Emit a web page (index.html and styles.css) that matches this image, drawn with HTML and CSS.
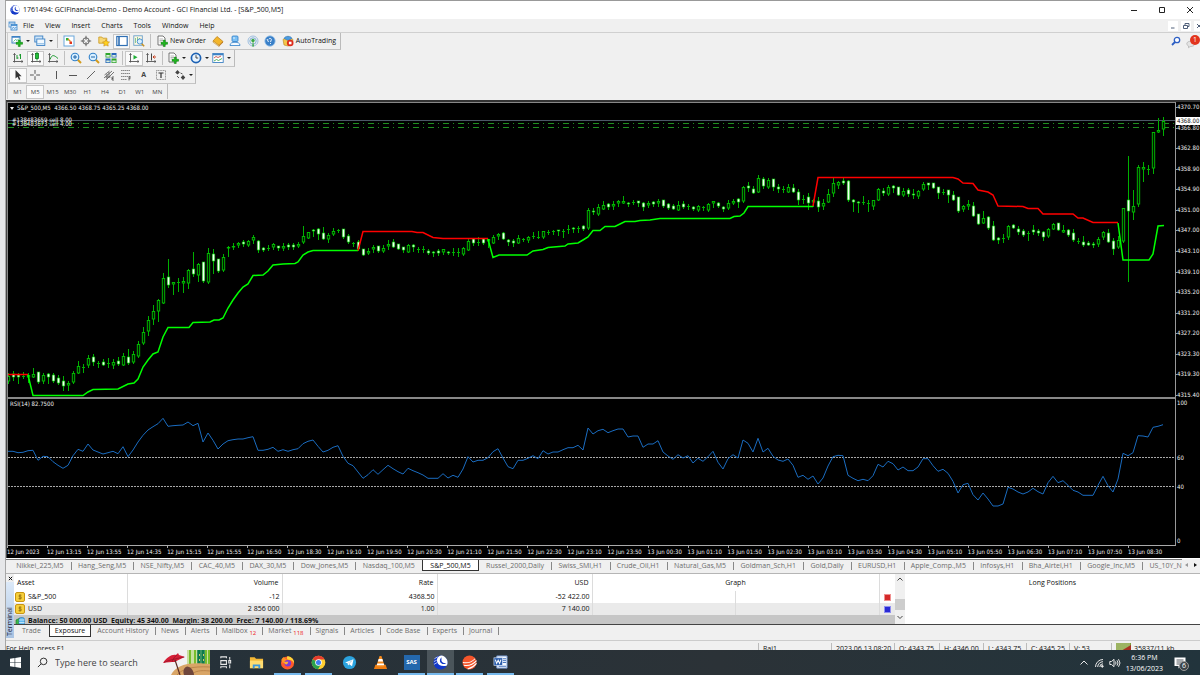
FILE: index.html
```html
<!DOCTYPE html>
<html lang="en">

<head>
    <meta charset="UTF-8">
    <meta name="viewport" content="width=device-width, initial-scale=1.0">
    <title>1761494: GCIFinancial-Demo - Demo Account</title>

    <link rel="stylesheet" href="styles.css">
</head>

<body>

    <!-- Shared icon shapes -->
    <svg class="defs" width="0" height="0">
        <defs>
            <symbol id="gci" viewBox="0 0 16 16">
                <circle cx="8" cy="8" r="7.5" fill="#1238c8" />
                <path d="M9 0.5C5 1 3.5 4 4.500 7.500C5.500 11 9 12.500 14.500 11.500C15.500 10 16 8 15 5C13 1.500 11 .6 9 .5Z" fill="#fff" />
                <path d="M9 2.500C6.500 5 7 8.500 10 9.500C12 10 13.500 9 14 8.500C12 9 9.500 8 9 6Z" fill="#1238c8" />
                <path d="M1.500 4L5 2M1 7l3-1.500M1 10l3.500-2" stroke="#fff" stroke-width=".7" />
            </symbol>
            <symbol id="plus" viewBox="0 0 8 8">
                <path d="M3 .5h2v2.500h2.500v2H5v2.500H3V5H.5V3H3Z" fill="#1fb91f" stroke="#0c7d10" stroke-width=".6" />
            </symbol>
            <symbol id="axes" viewBox="0 0 12 12">
                <path d="M2.500 1.500v9M1 9.500h10M1.500 3l1-1.500 1 1.500M9.500 8.500l1.500 1-1.500 1" fill="none" stroke="#555" stroke-width=".9" />
            </symbol>
            <symbol id="lens" viewBox="0 0 12 12">
                <path d="M7.500 7.500l3.500 3.500" stroke="#d49b1c" stroke-width="2" />
                <circle cx="5" cy="5" r="3.800" fill="#d8efff" stroke="#2f7fc9" stroke-width="1.100" />
            </symbol>
            <symbol id="page" viewBox="0 0 12 12">
                <path d="M2 1h5l2 2v7H2z" fill="#fff" stroke="#555" stroke-width=".8" />
                <path d="M3.500 4h3.500M3.500 5.500h3.500M3.500 7h2" stroke="#888" stroke-width=".6" />
            </symbol>
            <symbol id="coin" viewBox="0 0 10 10">
                <rect x=".5" y=".5" width="9" height="9" rx="1.500" fill="#f6cf3c" stroke="#c99512" />
                <path d="M6.500 3.200H4.200v1.700h2v1.700H3.500M5 2.200v5.600" fill="none" stroke="#8a6508" stroke-width=".7" />
            </symbol>
        </defs>
    </svg>

    <div class="app">

        <header class="titlebar">
            <svg class="ico"><use href="#gci" /></svg>
            <h1>1761494: GCIFinancial-Demo - Demo Account - GCI Financial Ltd. - [S&amp;P_500,M5]</h1>
            <div class="win-buttons">
                <button aria-label="Minimize"><svg viewBox="0 0 8 8"><path d="M1 4.500h6" /></svg></button>
                <button aria-label="Maximize"><svg viewBox="0 0 8 8"><path d="M1.500 1.500h5v5h-5z" /></svg></button>
                <button aria-label="Close"><svg viewBox="0 0 8 8"><path d="M1 1l6 6M7 1l-6 6" /></svg></button>
            </div>
        </header>

        <nav class="menubar">
            <svg class="ico" viewBox="0 0 10 10"><rect x="1" y="1" width="6" height="5" fill="#fff" stroke="#4a90d0" stroke-width=".8" /><rect x="3" y="3.500" width="6" height="5.500" fill="#dff0ff" stroke="#2f7fc9" stroke-width=".8" /><path d="M1 2h6M3 4.500h6M4 7.500l1.500-1 1 .8 2-1" fill="none" stroke="#2f7fc9" stroke-width=".8" /></svg>
            <a href="#">File</a>
            <a href="#">View</a>
            <a href="#">Insert</a>
            <a href="#">Charts</a>
            <a href="#">Tools</a>
            <a href="#">Window</a>
            <a href="#">Help</a>
            <div class="mdi-buttons">
                <button aria-label="Minimize chart"><svg viewBox="0 0 8 8"><path d="M2 6h3.500" /></svg></button>
                <button aria-label="Restore chart"><svg viewBox="0 0 8 8"><path d="M1.500 3.500h4v3h-4zM3 3.500V1.500h4v3H5.500" /></svg></button>
                <button aria-label="Close chart"><svg viewBox="0 0 8 8"><path d="M2 2l4 4M6 2l-4 4" /></svg></button>
            </div>
        </nav>

        <div class="toolbars">
            <div class="toolbar">
                <div class="group two-wide">
                    <button class="drop" aria-label="New chart"><svg viewBox="0 0 12 12"><rect x="1" y="1.500" width="8" height="6.500" fill="#fff" stroke="#3d82c4" /><path d="M1 2h8" stroke="#3d82c4" stroke-width="1.500" /><path d="M2.500 6.500l2-2 1.500 1 2-2" fill="none" stroke="#2a7" stroke-width=".7" /><use href="#plus" x="4.500" y="4.500" width="7.500" height="7.500" /></svg></button>
                    <button class="drop" aria-label="Profiles"><svg viewBox="0 0 12 12"><rect x=".8" y="1" width="8" height="6" fill="#cfe6fa" stroke="#3d82c4" stroke-width=".9" /><rect x="2.800" y="4" width="8" height="6.500" fill="#f2f9ff" stroke="#3d82c4" stroke-width=".9" /><path d="M2.800 8.800h8" stroke="#7fb4e0" /></svg></button>
                </div>
                <i class="sep"></i>
                <div class="group five">
                    <button aria-label="Market Watch"><svg viewBox="0 0 12 12"><rect x="1" y="1" width="10" height="10" fill="#fff" stroke="#6aa7dc" /><path d="M3 5.500V3h2.500v2.500z" fill="#2eaf3a" /><path d="M5 4l2.500 2.500" stroke="#e08a1c" stroke-width="1.200" /><path d="M6.500 6.500h2.500V9H6.500z" fill="#e0341c" /></svg></button>
                    <button aria-label="Data Window"><svg viewBox="0 0 12 12"><circle cx="6" cy="6" r="3.200" fill="none" stroke="#555" stroke-width=".9" /><path d="M6 .8v4M6 7.200v4M.8 6h4M7.200 6h4" stroke="#555" stroke-width=".9" /></svg></button>
                    <button aria-label="Navigator"><svg viewBox="0 0 12 12"><path d="M.8 2h3l1 1.200h4v5h-8z" fill="#f7d774" stroke="#c9981f" stroke-width=".8" /><path d="M8 4.500l1.100 2.200 2.400.3-1.700 1.700.4 2.400L8 10l-2.200 1.100.4-2.400L4.500 7l2.400-.3z" fill="#ffd21f" stroke="#c78a10" stroke-width=".6" /></svg></button>
                    <button class="pressed" aria-label="Terminal"><svg viewBox="0 0 12 12"><rect x=".8" y="1.500" width="10.400" height="9" fill="#fff" stroke="#2f6fb4" stroke-width="1.200" /><path d="M3 2v8" stroke="#2f6fb4" stroke-width="1.600" /></svg></button>
                    <button aria-label="Strategy Tester"><svg viewBox="0 0 12 12"><rect x=".8" y=".8" width="8.500" height="9.500" fill="#fff8e0" stroke="#6aa0cc" stroke-width=".9" /><path d="M2.500 3v5M4.500 2v4M6.500 3v3" stroke="#6b8" stroke-width=".8" /><path d="M8.500 8.500l2.700 2.700" stroke="#c89020" stroke-width="1.500" /><circle cx="6.800" cy="6.500" r="2.600" fill="#d8efff" stroke="#2f7fc9" stroke-width=".8" /></svg></button>
                </div>
                <i class="sep"></i>
                <button class="labelled"><svg viewBox="0 0 12 12"><use href="#page" width="12" height="12" /><use href="#plus" x="4.500" y="4.500" width="7.500" height="7.500" /></svg>New Order</button>
                <div class="group four">
                    <button aria-label="MetaEditor"><svg viewBox="0 0 12 12"><path d="M1 6l4-4.500L11 6.500 7 10.500z" fill="#f3b62c" stroke="#b97a10" stroke-width=".7" /><path d="M1 6v1.200l6 4.300V10.500z" fill="#fff3c4" stroke="#b97a10" stroke-width=".5" /><path d="M7 11.500l4-4V6.500l-4 4z" fill="#b9701a" /></svg></button>
                    <button aria-label="Community"><svg viewBox="0 0 12 12"><rect x="3" y="1" width="6" height="5.500" rx="1" fill="#7cc1f5" stroke="#2f7fc9" stroke-width=".8" /><path d="M1 10.500c0-2.500 2-3.200 5-3.200s5 .7 5 3.200z" fill="#eef7ff" stroke="#2f7fc9" stroke-width=".8" /><path d="M4 3h2M4 9h4" stroke="#fff" stroke-width=".8" /></svg></button>
                    <button aria-label="Signals"><svg viewBox="0 0 12 12"><circle cx="6" cy="6" r="5" fill="none" stroke="#9fbfe0" stroke-width="1" /><circle cx="6" cy="6" r="3.200" fill="none" stroke="#7fb0d8" /><path d="M6 5l-.8 6.500h1.800z" fill="#3aa845" /><circle cx="6" cy="5.500" r="1.700" fill="#3aa845" /></svg></button>
                    <button aria-label="Help"><svg viewBox="0 0 12 12"><circle cx="6" cy="6" r="5.200" fill="#3a80c8" stroke="#9cc4ea" stroke-width=".8" /><path d="M3 4l1.500 3M4.800 4.200c0-1 3-1.200 2.500.6L6.500 7M6.500 8v1" fill="none" stroke="#fff" stroke-width=".9" /></svg></button>
                </div>
                <button class="labelled"><svg viewBox="0 0 12 12"><path d="M1 4.500l5-3 5 3-1 5.500-4 1-4-1z" fill="#f5c64a" stroke="#b6861c" stroke-width=".6" /><path d="M2 3.500c1-3 7-3 8 0L6 5.500z" fill="#4a9be0" stroke="#2a6fb0" stroke-width=".5" /><circle cx="8.200" cy="8" r="3.300" fill="#dd2a1b" /><rect x="6.900" y="6.700" width="2.600" height="2.600" fill="#fff" /></svg>AutoTrading</button>
            </div>

            <div class="toolbar">
                <div class="group three">
                    <button aria-label="Bar chart"><svg viewBox="0 0 12 12"><use href="#axes" width="12" height="12" /><path d="M5 3v4M5 6h1.500M8.500 2v5M7 3h1.500" fill="none" stroke="#189a2c" stroke-width="1" /></svg></button>
                    <button class="pressed" aria-label="Candlesticks"><svg viewBox="0 0 12 12"><use href="#axes" width="12" height="12" /><path d="M7 0v8.500" stroke="#189a2c" /><rect x="5.500" y="1.500" width="3" height="5" fill="#22c038" stroke="#0d7a20" stroke-width=".8" /></svg></button>
                    <button aria-label="Line chart"><svg viewBox="0 0 12 12"><use href="#axes" width="12" height="12" /><path d="M3 7.500C5 2 7 3 11 6.500" fill="none" stroke="#189a2c" stroke-width="1" /></svg></button>
                </div>
                <i class="sep"></i>
                <div class="group three">
                    <button aria-label="Zoom in"><svg viewBox="0 0 12 12"><use href="#lens" width="12" height="12" /><path d="M3 5h4M5 3v4" stroke="#1c62a8" /></svg></button>
                    <button aria-label="Zoom out"><svg viewBox="0 0 12 12"><use href="#lens" width="12" height="12" /><path d="M3 5h4" stroke="#1c62a8" /></svg></button>
                    <button aria-label="Tile windows"><svg viewBox="0 0 12 12"><path d="M.5 1h5v4.500h-5zM6.500 6.500h5V11h-5z" fill="#2fa52c" /><path d="M6.500 1h5v4.500h-5zM.5 6.500h5V11h-5z" fill="#2667ba" /><path d="M1.300 3h3.400v1.700H1.300zM7.300 3h3.400v1.700H7.300zM1.300 8.500h3.400v1.700H1.300zM7.300 8.500h3.400v1.700H7.300z" fill="#dcefdc" /></svg></button>
                </div>
                <i class="sep"></i>
                <div class="group two">
                    <button class="pressed" aria-label="Auto scroll"><svg viewBox="0 0 12 12"><use href="#axes" width="12" height="12" /><path d="M5.500 3l4 2.300-4 2.300z" fill="#1fae35" /></svg></button>
                    <button aria-label="Chart shift"><svg viewBox="0 0 12 12"><use href="#axes" width="12" height="12" /><path d="M6.500 1.500v7" stroke="#444" /><path d="M11 5H8M9.500 3.500L8 5l1.500 1.500" fill="none" stroke="#c8401c" stroke-width="1" /></svg></button>
                </div>
                <i class="sep"></i>
                <div class="group three-wide">
                    <button class="drop" aria-label="Indicators"><svg viewBox="0 0 12 12"><use href="#page" width="12" height="12" /><use href="#plus" x="4.500" y="4.500" width="7.500" height="7.500" /></svg></button>
                    <button class="drop" aria-label="Periods"><svg viewBox="0 0 12 12"><circle cx="6" cy="6" r="4.600" fill="#e8f4ff" stroke="#1d62b4" stroke-width="1.700" /><path d="M6 3.200V6h2.200" fill="none" stroke="#333" stroke-width=".9" /></svg></button>
                    <button class="drop" aria-label="Templates"><svg viewBox="0 0 12 12"><rect x=".8" y="1.500" width="10.400" height="9" fill="#fff" stroke="#3d82c4" stroke-width=".9" /><path d="M.8 2.500h10.400" stroke="#3d82c4" stroke-width="1.600" /><path d="M2 6l2-1.500 2 1 3-1.500" fill="none" stroke="#c0392b" stroke-width=".8" /><path d="M2 9l2.500-1.500 2 1 3.500-2" fill="none" stroke="#2a9d3a" stroke-width=".8" /></svg></button>
                </div>
            </div>

            <div class="toolbar">
                <div class="group two">
                    <button class="pressed" aria-label="Cursor"><svg viewBox="0 0 12 12"><path d="M3.500 1v8.500l2-1.800 1.500 3.300 1.400-.7L7 7.200h2.600z" fill="#333" /></svg></button>
                    <button aria-label="Crosshair"><svg viewBox="0 0 12 12"><path d="M6 1v3.800M6 7.200V11M1 6h3.800M7.200 6H11" stroke="#555" /></svg></button>
                </div>
                <i class="blank"></i>
                <div class="group seven">
                    <button aria-label="Vertical line"><svg viewBox="0 0 12 12"><path d="M6.500 2v8" stroke="#555" /></svg></button>
                    <button aria-label="Horizontal line"><svg viewBox="0 0 12 12"><path d="M2 6.500h8" stroke="#555" /></svg></button>
                    <button aria-label="Trendline"><svg viewBox="0 0 12 12"><path d="M2 10l8-8" stroke="#555" stroke-width=".9" /></svg></button>
                    <button aria-label="Equidistant channel"><svg viewBox="0 0 12 12"><path d="M1 9l8-7M3 11l8-8M1.500 6l5-4M4 5v5M6 3v5.500M2.500 8h5" stroke="#555" stroke-width=".8" /><path d="M11 8H9v3h2M9 9.500h1.500" fill="none" stroke="#333" stroke-width=".7" /></svg></button>
                    <button aria-label="Fibonacci"><svg viewBox="0 0 12 12"><path d="M1 1.500h9M1 4.500h9M1 7.500h9M1 10.500h6" stroke="#888" stroke-dasharray="1.500 .4" /><path d="M11 8H9v3.500M9 9.700h1.500" fill="none" stroke="#333" stroke-width=".7" /></svg></button>
                    <button class="letter" aria-label="Text">A</button>
                    <button aria-label="Text label"><svg viewBox="0 0 12 12"><rect x="1.500" y="1.500" width="9" height="9" fill="none" stroke="#777" stroke-width=".8" stroke-dasharray="1 .6" /><path d="M3.500 4h5M6 4v5" stroke="#333" stroke-width="1.200" /></svg></button>
                </div>
                <button class="drop arrows" aria-label="Arrows"><svg viewBox="0 0 12 12"><path d="M3.500 1l2.300 2.500-2.300 2-2.300-2zM9 6l2.300 2.500L9 11 6.700 8.500z" fill="#444" /><path d="M6.500 4l2 1M3 7l2 2" stroke="#444" stroke-width=".9" /></svg></button>
            </div>

            <div class="toolbar periods">
                <div class="group nine">
                    <button>M1</button>
                    <button class="pressed">M5</button>
                    <button>M15</button>
                    <button>M30</button>
                    <button>H1</button>
                    <button>H4</button>
                    <button>D1</button>
                    <button>W1</button>
                    <button>MN</button>
                </div>
            </div>

            <div class="notify">
                <svg viewBox="0 0 10 10"><path d="M1 9l3-3" stroke="#2d5fc4" stroke-width="1.800" /><circle cx="6" cy="4" r="2.700" fill="#fff" stroke="#2d5fc4" stroke-width="1.300" /></svg>
                <div class="bell">
                    <svg viewBox="0 0 12 10"><path d="M1 4c1-3 8-3 9 0s-2 4-5 4L3 9.500 3 7.500C2 7 1 6 1 4z" fill="#e4e4e4" stroke="#aaa" stroke-width=".8" /></svg>
                    <span class="badge">1</span>
                </div>
            </div>
        </div>

        <main class="chart">
            <section class="pane price-pane">
                <svg class="plot" id="price" viewBox="8 103 1167 294" preserveAspectRatio="none">
                    <path d="M8 120.500H1175" stroke="#4c5866" shape-rendering="crispEdges" />
                    <path d="M8 123.500H1175M8 127.500H1175" stroke="#1f8f1f" stroke-dasharray="6 4 1 4" shape-rendering="crispEdges" />
                </svg>
                <p class="quote"><i></i>S&amp;P_500,M5&nbsp; 4366.50 4368.75 4365.25 4368.00</p>
                <p class="order">#138483659 sell 8.00</p>
                <p class="order second">#138483673 sell 4.00</p>
            </section>
            <div class="axis price-axis">
                <span>4370.70</span>
                <span>4366.80</span>
                <span>4362.80</span>
                <span>4358.90</span>
                <span>4354.90</span>
                <span>4351.00</span>
                <span>4347.00</span>
                <span>4343.10</span>
                <span>4339.10</span>
                <span>4335.20</span>
                <span>4331.20</span>
                <span>4327.20</span>
                <span>4323.30</span>
                <span>4319.30</span>
                <span>4315.40</span>
                <b class="last">4368.00</b>
            </div>

            <section class="pane rsi-pane">
                <svg class="plot" id="rsi" viewBox="8 399 1167 146" preserveAspectRatio="none">
                    <path d="M8 457.500H1175M8 486.500H1175" stroke="#a8a8a8" stroke-dasharray="2 1" shape-rendering="crispEdges" />
                </svg>
                <p class="quote">RSI(14) 82.7500</p>
            </section>
            <div class="axis rsi-axis">
                <span>100</span>
                <span>60</span>
                <span>40</span>
                <span>0</span>
            </div>

            <div class="times">
                <span>12 Jun 2023</span>
                <span>12 Jun 13:15</span>
                <span>12 Jun 13:55</span>
                <span>12 Jun 14:35</span>
                <span>12 Jun 15:15</span>
                <span>12 Jun 15:55</span>
                <span>12 Jun 16:50</span>
                <span>12 Jun 18:30</span>
                <span>12 Jun 19:10</span>
                <span>12 Jun 19:50</span>
                <span>12 Jun 20:30</span>
                <span>12 Jun 21:10</span>
                <span>12 Jun 21:50</span>
                <span>12 Jun 22:30</span>
                <span>12 Jun 23:10</span>
                <span>12 Jun 23:50</span>
                <span>13 Jun 00:30</span>
                <span>13 Jun 01:10</span>
                <span>13 Jun 01:50</span>
                <span>13 Jun 02:30</span>
                <span>13 Jun 03:10</span>
                <span>13 Jun 03:50</span>
                <span>13 Jun 04:30</span>
                <span>13 Jun 05:10</span>
                <span>13 Jun 05:50</span>
                <span>13 Jun 06:30</span>
                <span>13 Jun 07:10</span>
                <span>13 Jun 07:50</span>
                <span>13 Jun 08:30</span>
            </div>
        </main>

        <nav class="tabs chart-tabs">
            <div class="tab-list">
                <a href="#">Nikkei_225,M5</a>
                <a href="#">Hang_Seng,M5</a>
                <a href="#">NSE_Nifty,M5</a>
                <a href="#">CAC_40,M5</a>
                <a href="#">DAX_30,M5</a>
                <a href="#">Dow_Jones,M5</a>
                <a href="#">Nasdaq_100,M5</a>
                <a href="#" class="active">S&amp;P_500,M5</a>
                <a href="#">Russel_2000,Daily</a>
                <a href="#">Swiss_SMI,H1</a>
                <a href="#">Crude_Oil,H1</a>
                <a href="#">Natural_Gas,M5</a>
                <a href="#">Goldman_Sch,H1</a>
                <a href="#">Gold,Daily</a>
                <a href="#">EURUSD,H1</a>
                <a href="#">Apple_Comp.,M5</a>
                <a href="#">Infosys,H1</a>
                <a href="#">Bha_Airtel,H1</a>
                <a href="#">Google_Inc,M5</a>
                <a href="#">US_10Y_N</a>
            </div>
            <button class="scroll-tab dim" aria-label="Scroll left"></button>
            <button class="scroll-tab" aria-label="Scroll right"></button>
        </nav>

        <section class="terminal">
            <aside>
                <button aria-label="Close terminal"><svg viewBox="0 0 6 6"><path d="M1 1l4 4M5 1L1 5" stroke="#111" stroke-width="1.200" /></svg></button>
                <h2>Terminal</h2>
            </aside>
            <div class="terminal-body">
                <div class="terminal-top">
                    <div class="table-wrap">
                        <table>
                            <thead>
                                <tr>
                                    <th class="asset">Asset</th>
                                    <th class="num">Volume</th>
                                    <th class="num">Rate</th>
                                    <th class="num">USD</th>
                                    <th class="graph" colspan="2">Graph</th>
                                    <th class="key"></th>
                                </tr>
                            </thead>
                            <tbody>
                                <tr>
                                    <td class="asset"><svg><use href="#coin" /></svg>S&amp;P_500</td>
                                    <td>-12</td>
                                    <td>4368.50</td>
                                    <td>-52 422.00</td>
                                    <td></td>
                                    <td></td>
                                    <td class="key"><i class="red"></i></td>
                                </tr>
                                <tr class="alt">
                                    <td class="asset"><svg><use href="#coin" /></svg>USD</td>
                                    <td>2 856 000</td>
                                    <td>1.00</td>
                                    <td>7 140.00</td>
                                    <td></td>
                                    <td></td>
                                    <td class="key"><i class="blue"></i></td>
                                </tr>
                                <tr class="balance">
                                    <td class="asset" colspan="7"><svg viewBox="0 0 10 10"><path d="M1 4l4-2v7H1z" fill="#3bb54a" stroke="#187a28" stroke-width=".6" /><rect x="4" y="1.500" width="5.500" height="8" rx="2" fill="#5fb8f0" stroke="#2372b0" stroke-width=".6" /><path d="M4 4h5.500M4 6.500h5.500" stroke="#fff" stroke-width=".6" /></svg>Balance: 50 000.00 USD&nbsp; Equity: 45 340.00&nbsp; Margin: 38 200.00&nbsp; Free: 7 140.00 / 118.69%</td>
                                </tr>
                            </tbody>
                        </table>
                    </div>
                    <div class="scrollbar">
                        <button aria-label="Scroll up"><svg viewBox="0 0 8 8"><path d="M1.500 5.500L4 3l2.500 2.500" /></svg></button>
                        <i class="thumb"></i>
                        <button aria-label="Scroll down"><svg viewBox="0 0 8 8"><path d="M1.500 3L4 5.500 6.500 3" /></svg></button>
                    </div>
                    <div class="positions">Long Positions</div>
                </div>
                <nav class="tabs terminal-tabs">
                    <a href="#">Trade</a>
                    <a href="#" class="active">Exposure</a>
                    <a href="#">Account History</a>
                    <a href="#">News</a>
                    <a href="#">Alerts</a>
                    <a href="#">Mailbox <sub>12</sub></a>
                    <a href="#">Market <sub>118</sub></a>
                    <a href="#">Signals</a>
                    <a href="#">Articles</a>
                    <a href="#">Code Base</a>
                    <a href="#">Experts</a>
                    <a href="#">Journal</a>
                </nav>
            </div>
        </section>

        <footer class="status">
            <span>For Help, press F1</span>
            <span>Rai1</span>
            <span>2023.06.13 08:20</span>
            <span>O: 4343.75</span>
            <span>H: 4346.00</span>
            <span>L: 4343.75</span>
            <span>C: 4345.25</span>
            <span>V: 53</span>
            <span class="traffic"><svg viewBox="0 0 15 8"><rect width="15" height="8" fill="#7d9a3a" /><path d="M1 0v8M3 0v8M5 0v8M7 0v8M9 0v8M11 0v8M13 0v8" stroke="#d8e4b0" stroke-width=".7" /><path d="M5 8l10-6v6z" fill="#a83222" /></svg>35837/11 kb</span>
        </footer>
    </div>

    <div class="taskbar">
        <button class="start" aria-label="Start"><svg viewBox="0 0 12 12"><path d="M0 2l5-.8v4.400H0zM5.700 1L12 0v5.600H5.700zM0 6.300h5v4.500L0 10zM5.700 6.300H12V12l-6.300-1z" fill="#fff" /></svg></button>
        <label class="search">
            <svg class="search-icon" viewBox="0 0 12 12"><circle cx="7.200" cy="4.800" r="3.600" fill="none" stroke="#222" /><path d="M4.600 7.400L1 11" stroke="#222" /></svg>
            <input type="text" placeholder="Type here to search" aria-label="Search">
            <svg class="beach" viewBox="0 0 47 25">
                <path d="M24 0h23v17H24z" fill="#c9dfa0" />
                <path d="M27 0v14M32 0v16M43 0v18M46 0v18" stroke="#79bd2c" stroke-width="2" />
                <path d="M36 0v16M40 0v16" stroke="#0d7b4d" stroke-width="3.500" />
                <path d="M36 5h1M40 5h1M36 10h1M40 10h1" stroke="#d7c46a" stroke-width="2" />
                <path d="M8 25C12 16 24 11 47 14V25z" fill="#d9a566" />
                <path d="M14 25c5-6 15-9 33-8M28 25c4-4 9-5 19-4" fill="none" stroke="#b57c43" stroke-width=".8" />
                <path d="M21 25c-2-6 2-10 5-8 3 1 5 5 5 8z" fill="#70463c" />
                <path d="M0 13C4 7 9 4 13 5L15 3 16 5 22 7C19 8 15 10 12 12 8 12 4 12 0 13z" fill="#d51f37" />
                <path d="M1 12.500C6 10 12 9 21 7M9 12C10 9 12 6 14 5" fill="none" stroke="#8f1225" stroke-width=".7" />
                <path d="M12 10l5 15" stroke="#5b2c25" stroke-width="1.200" />
            </svg>
        </label>
        <div class="apps">
            <button aria-label="Task view"><svg viewBox="0 0 16 16"><path d="M3 3.500V2h6v1.500M3 6h6v4H3zM3 14v-1.500h6V14M12.500 2v3M12.500 10v4M11.500 6h2v2.500h-2z" fill="none" stroke="#e8e8e8" stroke-width="1.100" /></svg></button>
            <button aria-label="File Explorer"><svg viewBox="0 0 16 16"><path d="M1 2.500h5l1.500 1.500H15v10H1z" fill="#f3b735" /><path d="M1 6h14v8H1z" fill="#ffdc70" /><path d="M4 14v-4h8v4h-2v-2H6v2z" fill="#3b98dd" /></svg></button>
            <button class="open" aria-label="Firefox"><svg viewBox="0 0 16 16"><circle cx="8" cy="8.500" r="7" fill="#ff5a2a" /><path d="M8 1c5 1 7.500 4.500 7 8-1-3-4-4-6-4-2 0-2-2-1-4z" fill="#ffd43a" /><path d="M1.500 5c1-2 2-3 3-3 0 1 1 2 3 2.500L3 9z" fill="#ff9425" /><circle cx="8.300" cy="8.800" r="3.500" fill="#7c3bd6" /><path d="M4 8c2-2 4 0 5-1-1 4-3 4-5 1z" fill="#ffb12e" /></svg></button>
            <button class="open" aria-label="Chrome"><svg viewBox="0 0 16 16"><circle cx="8" cy="8" r="7.300" fill="#ffce30" /><path d="M8 8L1.700 4.400A7.300 7.300 0 0 1 14.500 4.700H8z" fill="#e63c2e" /><path d="M1.700 4.400A7.300 7.300 0 0 0 7.500 15.300L10.800 9.500 8 8z" fill="#2ba24c" /><circle cx="8" cy="8" r="3.500" fill="#fff" /><circle cx="8" cy="8" r="2.700" fill="#3f7df0" /></svg></button>
            <button aria-label="Telegram"><svg viewBox="0 0 16 16"><circle cx="8" cy="8" r="7" fill="#2ba3df" /><path d="M3.300 7.900L12.300 4.400 10.700 12 7.800 9.900 6.400 11.300 6 8.900z" fill="#fff" /><path d="M6 8.900l4.700-3-3.300 3.900" fill="none" stroke="#a8cce0" stroke-width=".6" /></svg></button>
            <button aria-label="VLC"><svg viewBox="0 0 16 16"><path d="M2.500 10.500h11L15 15H1z" fill="#ef7d11" /><path d="M7 1h2l3.500 11c-2 1.200-7 1.200-9 0z" fill="#f58a1c" /><path d="M6 4.200h4l.8 2.600H5.200zM4.500 9h7l.5 1.800H4z" fill="#fff" /></svg></button>
            <button class="open" aria-label="SAS"><span class="sas">SAS</span></button>
            <button class="open current" aria-label="GCI Trader"><svg><use href="#gci" /></svg></button>
            <button class="open" aria-label="Orange app"><svg viewBox="0 0 16 16"><circle cx="8" cy="8" r="7.500" fill="#f4552b" /><path d="M1 8c5 1 10-1 13-4M2 11c6 1 10-1 13.500-5M6 15c4-1 7-3 9.500-6" fill="none" stroke="#fff" stroke-width="1.100" /></svg></button>
            <button class="open" aria-label="Word"><svg viewBox="0 0 16 16"><path d="M4 1h11v13H4z" fill="#f4f8ff" stroke="#6f93cc" /><path d="M10 4h4M10 6h4M10 8h4M6 12h8" stroke="#3c6db8" /><rect x="1" y="3" width="9" height="8" fill="#2a5caa" stroke="#cfe0fa" stroke-width=".7" /><path d="M2.500 5l1.400 4L5.500 5.500 7 9l1.500-4" fill="none" stroke="#fff" stroke-width="1.100" /></svg></button>
        </div>
        <div class="tray">
            <button aria-label="Hidden icons"><svg viewBox="0 0 10 10"><path d="M1.500 6.500L5 3l3.500 3.500" /></svg></button>
            <button aria-label="Network"><svg viewBox="0 0 10 10"><path d="M1.500 9A7.500 7.500 0 0 1 9 1.500M3.700 9A5.300 5.300 0 0 1 9 3.700M5.800 9A3.200 3.200 0 0 1 9 5.800" /><circle cx="8.300" cy="8.300" r=".9" fill="#e8e8e8" /></svg></button>
            <button class="sound" aria-label="Volume"><svg viewBox="0 0 12 10"><path d="M.8 3.500h1.700L5 1.300v7.400L2.500 6.500H.8zM6.500 3.500q1 1.500 0 3M8 2.300q2 2.700 0 5.400M9.500 1.200q3 3.800 0 7.600" /></svg></button>
            <div class="clock">
                <span>6:36 PM</span>
                <span>13/06/2023</span>
            </div>
            <button class="notes" aria-label="Notifications"><svg viewBox="0 0 12 12"><path d="M.5.5h11V9H7L4.500 11.500V9h-4z" fill="#fff" /><path d="M2.500 3h7M2.500 5h7M2.500 7h4" stroke="#2a3138" stroke-width=".8" /></svg><span class="count">6</span></button>
        </div>
    </div>

    <script src="chart.js"></script>
</body>

</html>
```
FILE: styles.css
```css
* {
    box-sizing: border-box;
    padding: 0;
    margin: 0;
}

body {
    display: flex;
    flex-direction: column;
    height: 100vh;
    overflow: hidden;
    background: #e6e7e9;
    color: #111;
    font-family: 'Open Sans', 'Noto Sans', sans-serif;
    font-size: 7px;
    line-height: 10px;
}

a {
    color: inherit;
    text-decoration: none;
}

button {
    border: none;
    background: none;
    color: inherit;
    font: inherit;
    display: flex;
    align-items: center;
    justify-content: center;
}

svg {
    display: block;
    flex: none;
}

.defs {
    position: absolute;
}

.app {
    flex: 1;
    min-height: 0;
    margin-left: 5px;
    display: flex;
    flex-direction: column;
    background: #f0f0f0;
    border-left: 1px solid #a6a6a6;
    border-top: 1px solid #999;
    overflow: hidden;
}

.ico {
    width: 10px;
    height: 10px;
}

/* Title bar */
.titlebar {
    flex: none;
    height: 18px;
    display: flex;
    align-items: center;
    padding-left: 4px;
    background: #fff;
}

.titlebar h1 {
    flex: 1;
    margin-left: 3px;
    font-size: 7px;
    font-weight: normal;
}

.win-buttons {
    display: flex;
    margin-right: -4px;
}

.win-buttons button {
    width: 28px;
    height: 17px;
}

.win-buttons svg,
.mdi-buttons svg {
    width: 8px;
    height: 8px;
    fill: none;
    stroke: #222;
    stroke-width: 1;
}

/* Menu */
.menubar {
    flex: none;
    height: 14px;
    display: flex;
    align-items: center;
    gap: 11px;
    padding-left: 2px;
    border-bottom: 1px solid #d0d0d0;
}

.menubar .ico {
    margin-right: -6px;
}

.mdi-buttons {
    margin-left: auto;
    margin-right: -4px;
    display: flex;
    gap: 3px;
}

.mdi-buttons button {
    width: 10px;
    height: 10px;
    background: #fff;
}

.mdi-buttons svg {
    stroke: #51607a;
}

/* Toolbars */
.toolbars {
    flex: none;
    position: relative;
    padding: 0 0 1px 1px;
}

.toolbar {
    display: flex;
    align-items: center;
    width: max-content;
    height: 17px;
    padding: 0 1px;
    border-right: 1px solid #bbb;
    border-bottom: 1px solid #c4c4c4;
    border-left: 1px solid #ccc;
}

.toolbar.periods {
    height: 15px;
    border-bottom: none;
}

.toolbar button {
    height: 15px;
    gap: 1px;
    flex: 1;
    border: 1px solid transparent;
}

.toolbar button.pressed {
    background: #fafafa;
    border-color: #c8c8c8;
}

.toolbar svg {
    width: 12px;
    height: 12px;
}

.group {
    display: flex;
}

.two-wide { width: 46px; }
.two { width: 35px; }
.three { width: 53px; }
.three-wide { width: 68px; }
.four { width: 70px; }
.five { width: 88px; }
.seven { width: 123px; }
.nine { width: 157px; }

.periods button {
    color: #444;
    height: 14px;
    font-size: 6px;
}

.drop::after {
    content: "";
    margin-left: 2px;
    border: 2px solid transparent;
    border-top-color: #222;
    border-bottom: none;
}

.toolbar .arrows {
    padding-left: 3px;
}

.toolbar .letter {
    color: #444;
    font-weight: bold;
}

.sep {
    width: 1px;
    height: 14px;
    margin: 0 2px;
    background: #c0c0c0;
}

.blank {
    width: 3px;
}

.toolbar .labelled {
    flex: none;
    gap: 2px;
    padding: 0 2px;
}

.notify {
    position: absolute;
    top: 3px;
    right: 0;
    display: flex;
    gap: 5px;
}

.notify > svg {
    width: 10px;
    height: 10px;
}

.bell {
    position: relative;
    width: 14px;
    height: 12px;
}

.bell svg {
    width: 10px;
    height: 10px;
    margin-top: 3px;
}

.badge {
    position: absolute;
    top: -1px;
    right: 0;
    width: 10px;
    height: 10px;
    border-radius: 50%;
    background: #e2341d;
    color: #fff;
    text-align: center;
}

/* Chart */
.chart {
    flex: 1;
    min-height: 0;
    display: grid;
    grid-template-columns: 1fr 24px;
    grid-template-rows: 295fr 149fr 12px;
    background: #000;
    color: #f0f0f0;
    border-top: 2px solid #333;
    border-left: 1px solid #444;
    font-family: 'DejaVu Sans Condensed', 'DejaVu Sans', sans-serif;
    font-size: 6px;
    line-height: 8px;
}

.pane {
    position: relative;
    min-height: 0;
    border-left: 1px solid #888;
    border-right: 1px solid #999;
}

.price-pane {
    border-top: 1px solid #888;
}

.rsi-pane {
    border-top: 2px solid #888;
    border-bottom: 1px solid #aaa;
}

.plot {
    width: 100%;
    height: 100%;
    position: absolute;
}

.quote {
    position: absolute;
    top: 1px;
    left: 2px;
    white-space: nowrap;
}

.quote i {
    display: inline-block;
    margin-right: 3px;
    border: 2px solid transparent;
    border-top: 3px solid #eee;
    border-bottom: none;
}

.order {
    position: absolute;
    top: 13px;
    left: 4px;
}

.order.second {
    top: 17px;
}

.axis {
    position: relative;
    min-height: 0;
    display: flex;
    flex-direction: column;
}

.price-axis {
    justify-content: space-between;
    padding-top: 1px;
    margin-bottom: -2px;
}

.axis span {
    padding-left: 1px;
    white-space: nowrap;
}

.price-axis span::before {
    content: "";
    float: left;
    width: 2px;
    height: 1px;
    margin: 4px 0 0 -2px;
    background: #999;
}

.last {
    position: absolute;
    top: 15px;
    left: 0;
    right: 0;
    padding-left: 1px;
    background: #fff;
    color: #111;
    font-weight: normal;
}

.rsi-axis {
    padding: 2px 0 1px;
}

.rsi-axis span:nth-child(1) { flex: 55 1 0; }
.rsi-axis span:nth-child(2) { flex: 29 1 0; }
.rsi-axis span:nth-child(3) { flex: 54 1 0; }

.times {
    grid-column: 1 / -1;
    display: grid;
    grid-template-columns: repeat(29, 1fr);
    padding-right: 32px;
    line-height: 12px;
    white-space: nowrap;
}

.times span::before {
    content: "";
    position: absolute;
    width: 1px;
    height: 2px;
    background: #aaa;
}

/* Tabs */
.tabs {
    display: flex;
    align-items: stretch;
    white-space: nowrap;
    color: #6c6c6c;
}

.tabs a {
    position: relative;
}

.tabs a:not(.active)::after {
    content: "";
    position: absolute;
    top: 2px;
    right: -1px;
    width: 1px;
    height: 8px;
    background: #888;
}

.tabs .active {
    background: #fff;
    color: #111;
    border: 1px solid #333;
    border-top: none;
}

.chart-tabs {
    flex: none;
    height: 16px;
    padding-bottom: 2px;
    border-top: 1px solid #fff;
    border-bottom: 1px solid #b5b5b5;
}

.tab-list {
    flex: 1;
    min-width: 0;
    display: flex;
    overflow: hidden;
    border-top: 1px solid #777;
    padding-left: 3px;
    line-height: 11px;
}

.tab-list a {
    flex: 1 0 auto;
    padding: 0 7px;
    text-align: center;
}

/* The last tab runs under the scroll buttons */
.tab-list a:last-child {
    padding-right: 0;
}

.tab-list a:last-child::after {
    display: none;
}

.scroll-tab {
    width: 9px;
}

.scroll-tab::before {
    content: "";
    border: 2px solid transparent;
    border-left: 3px solid #111;
    border-right: none;
}

.scroll-tab.dim::before {
    border-left: none;
    border-right: 3px solid #999;
}

/* Terminal */
.terminal {
    flex: none;
    display: flex;
}

.terminal aside {
    width: 8px;
    display: flex;
    flex-direction: column;
}

.terminal aside button {
    height: 8px;
}

.terminal aside svg {
    width: 5px;
    height: 5px;
}

.terminal h2 {
    flex: 1;
    padding-top: 2px;
    background: linear-gradient(#a9c3e2, #dce9f8);
    color: #223;
    font-size: 7px;
    font-weight: normal;
    line-height: 8px;
    writing-mode: vertical-rl;
    transform: rotate(180deg);
}

.terminal-body {
    flex: 1;
    min-width: 0;
}

.terminal-top {
    height: 51px;
    display: flex;
    overflow: hidden;
    background: #fff;
    border-bottom: 1px solid #444;
}

.table-wrap {
    flex: 881;
    overflow: hidden;
}

table {
    width: 100%;
    table-layout: fixed;
    border-collapse: collapse;
    color: #111;
}

th,
td {
    height: 12px;
    padding: 0 2px;
    font-weight: normal;
    text-align: right;
    border-right: 1px solid #dcdcdc;
}

th {
    height: 17px;
    padding: 0 3px;
}

.asset {
    text-align: left;
    width: 113px;
}

td.asset {
    padding-left: 1px;
}

td.asset svg {
    float: left;
    width: 10px;
    height: 10px;
    margin-right: 3px;
}

th.num {
    width: 155px;
}

th.graph {
    text-align: center;
}

.key {
    width: 16px;
    border-right: none;
}

td.key {
    padding: 0 4px;
}

.key i {
    display: block;
    width: 7px;
    height: 7px;
}

.red {
    background: #d42a2a;
    border: 1px solid #f09090;
}

.blue {
    background: #2a2ad4;
    border: 1px solid #9090f0;
}

.alt {
    background: #eaeaea;
}

.balance {
    background: #c6c6c6;
}

.balance td {
    font-weight: bold;
    border: none;
}

.scrollbar {
    width: 10px;
    display: flex;
    flex-direction: column;
    background: #f0f0f0;
}

.scrollbar svg {
    width: 8px;
    height: 10px;
    fill: none;
    stroke: #444;
}

.thumb {
    height: 11px;
    margin: 15px 0 2px;
    background: #cdcdcd;
}

.positions {
    flex: 295;
    padding-top: 4px;
    text-align: center;
}

.terminal-tabs {
    height: 13px;
    line-height: 11px;
}

.terminal-tabs a {
    padding: 0 6px;
}

.terminal-tabs a:first-child {
    padding: 0 8px;
}

.terminal-tabs a:first-child::after {
    display: none;
}

.terminal-tabs .active {
    height: 12px;
    padding: 0 5px;
}

.terminal-tabs sub {
    color: #e22;
    font-size: 6px;
    line-height: 0;
}

/* Status bar */
.status {
    flex: none;
    height: 10px;
    margin-top: 2px;
    padding-top: 2px;
    border-top: 1px solid #ccc;
    display: grid;
    grid-template-columns: 1fr 73px 63px 45px 44px 43px 43px 42px 88px;
    overflow: hidden;
    line-height: 11px;
    white-space: nowrap;
}

.status span {
    padding-left: 4px;
    border-right: 1px solid #bbb;
}

.status span:first-child {
    padding-left: 0;
}

.status .traffic {
    display: flex;
    gap: 3px;
    border: none;
}

.traffic svg {
    width: 15px;
    height: 8px;
}

/* Taskbar */
.taskbar {
    flex: none;
    height: 25px;
    display: flex;
    background: linear-gradient(90deg, #24313a, #2b3237 60%, #22343c);
    color: #fff;
}

.start {
    width: 30px;
}

.start svg {
    width: 11px;
    height: 11px;
}

.search {
    width: 180px;
    display: flex;
    align-items: center;
    background: #f2f2f2;
    overflow: hidden;
}

.search-icon {
    width: 11px;
    height: 11px;
    margin: 0 7px;
}

.search input {
    flex: 1;
    min-width: 0;
    border: none;
    background: none;
    font: inherit;
    font-size: 9px;
    outline: none;
}

.search input::placeholder {
    color: #444;
}

.beach {
    width: 47px;
    height: 25px;
}

.apps {
    width: 306px;
    display: flex;
}

.apps button {
    flex: 1;
    margin: 0 2px;
    border-top: 2px solid transparent;
    border-bottom: 2px solid transparent;
}

.apps button.open {
    border-bottom-color: #76b9ed;
}

.apps .current {
    margin: 0;
    background: #4b555b;
    border-top-color: #4b555b;
}

.apps svg {
    width: 15px;
    height: 15px;
}

.sas {
    width: 16px;
    background: #2468ad;
    font-size: 6px;
    font-weight: bold;
    line-height: 15px;
}

.tray {
    margin-left: auto;
    display: flex;
    align-items: center;
    gap: 5px;
    padding-right: 14px;
}

.tray svg {
    width: 10px;
    height: 10px;
    fill: none;
    stroke: #e8e8e8;
    stroke-width: 1;
}

.tray .sound svg {
    width: 12px;
}

.clock {
    display: flex;
    flex-direction: column;
    align-items: center;
    line-height: 11px;
}

.tray .notes {
    position: relative;
    margin-left: 6px;
}

.tray .notes svg {
    width: 12px;
    height: 12px;
    stroke: none;
}

.count {
    position: absolute;
    left: 5px;
    top: 4px;
    width: 10px;
    height: 10px;
    border-radius: 50%;
    background: #3b4348;
    border: 1px solid #999;
    font-size: 7px;
    line-height: 8px;
}
```
FILE: chart.js
```js
// First bar x and distance between bars
const startX = 8
const step = 5

// high, body top, body bottom, low, filled
const candles = [
    [373, 376, 381, 383, 0], [371, 374, 377, 380, 1], [373, 375, 377, 383, 1], [372, 376, 376, 378, 0], [373, 375, 377, 382, 0],
    [368, 374, 377, 377, 0], [372, 372, 382, 383, 1], [373, 375, 381, 383, 0], [373, 374, 377, 383, 1], [373, 375, 381, 382, 1],
    [375, 378, 383, 384, 1], [376, 381, 386, 390, 1], [381, 383, 385, 390, 0], [371, 373, 382, 383, 0], [361, 366, 373, 373, 0],
    [364, 367, 367, 372, 0], [355, 358, 365, 367, 0], [354, 357, 362, 365, 1], [361, 363, 363, 367, 0], [359, 362, 365, 365, 1],
    [358, 363, 363, 367, 0], [359, 362, 365, 368, 0], [357, 361, 364, 365, 1], [353, 356, 365, 365, 0], [349, 357, 363, 364, 1],
    [351, 354, 362, 363, 0], [341, 344, 356, 357, 0], [327, 332, 343, 344, 0], [316, 320, 331, 335, 0], [305, 311, 319, 324, 0],
    [299, 300, 311, 321, 0], [273, 278, 303, 303, 0], [259, 277, 285, 287, 1], [282, 282, 284, 294, 0], [278, 282, 282, 291, 0],
    [277, 281, 283, 292, 0], [269, 270, 283, 288, 0], [252, 269, 274, 276, 1], [263, 264, 275, 281, 0], [262, 262, 281, 282, 1],
    [248, 253, 282, 283, 0], [249, 254, 261, 273, 1], [259, 259, 271, 272, 1], [254, 257, 270, 271, 0], [246, 247, 248, 256, 0],
    [243, 246, 247, 249, 0], [242, 243, 245, 247, 0], [240, 242, 244, 246, 1], [240, 241, 245, 246, 0], [235, 237, 240, 243, 0],
    [240, 241, 250, 252, 1], [247, 248, 250, 251, 1], [245, 248, 248, 250, 0], [243, 244, 247, 249, 0], [246, 246, 248, 250, 1],
    [243, 246, 248, 250, 0], [243, 245, 247, 249, 1], [243, 245, 247, 249, 1], [242, 244, 246, 247, 0], [226, 236, 242, 243, 0],
    [232, 232, 238, 238, 0], [229, 230, 231, 236, 1], [228, 229, 234, 239, 1], [227, 233, 239, 239, 1], [233, 235, 239, 242, 0],
    [228, 231, 234, 235, 0], [229, 230, 230, 232, 0], [229, 229, 237, 238, 1], [234, 236, 242, 243, 1], [242, 243, 243, 246, 0],
    [240, 242, 249, 250, 1], [249, 249, 255, 255, 1], [248, 251, 253, 254, 0], [245, 247, 249, 252, 0], [246, 246, 251, 252, 1],
    [245, 248, 251, 252, 0], [240, 244, 246, 249, 0], [239, 242, 247, 247, 1], [244, 244, 249, 249, 1], [247, 247, 250, 252, 1],
    [244, 245, 252, 252, 0], [244, 245, 247, 251, 1], [247, 249, 249, 252, 0], [246, 249, 249, 252, 0], [249, 251, 253, 254, 1],
    [251, 252, 253, 256, 1], [249, 251, 253, 255, 1], [249, 249, 252, 254, 0], [251, 252, 253, 254, 1], [248, 252, 252, 255, 0],
    [248, 252, 252, 256, 0], [247, 248, 254, 255, 0], [239, 241, 250, 250, 0], [239, 239, 243, 245, 1], [237, 242, 242, 245, 0],
    [239, 239, 243, 244, 1], [239, 239, 241, 247, 0], [235, 237, 243, 243, 0], [233, 234, 236, 239, 0], [232, 233, 239, 239, 1],
    [239, 240, 242, 245, 1], [239, 241, 243, 246, 1], [235, 238, 243, 243, 0], [238, 239, 239, 241, 0], [236, 237, 240, 242, 0],
    [232, 236, 236, 238, 0], [231, 237, 237, 238, 0], [231, 231, 237, 238, 0], [230, 232, 232, 234, 0], [230, 231, 231, 234, 0],
    [230, 230, 231, 235, 1], [229, 231, 231, 237, 0], [225, 229, 229, 233, 0], [227, 228, 229, 232, 1], [226, 228, 228, 232, 0],
    [225, 226, 229, 230, 1], [208, 210, 228, 229, 0], [208, 211, 212, 214, 1], [204, 207, 214, 215, 0], [201, 205, 209, 209, 0],
    [203, 204, 207, 209, 1], [201, 204, 206, 209, 0], [200, 201, 203, 206, 0], [196, 201, 203, 203, 0], [202, 203, 204, 206, 1],
    [200, 202, 202, 204, 0], [201, 201, 203, 206, 1], [202, 203, 207, 210, 1], [201, 203, 205, 207, 0], [201, 202, 204, 206, 1],
    [199, 201, 203, 206, 0], [200, 200, 206, 207, 1], [203, 204, 208, 209, 1], [204, 206, 209, 209, 1], [201, 205, 210, 210, 0],
    [201, 204, 207, 208, 1], [204, 206, 206, 209, 0], [206, 207, 209, 210, 1], [205, 206, 210, 211, 0], [206, 207, 207, 210, 0],
    [203, 204, 210, 211, 0], [201, 201, 203, 207, 0], [202, 203, 206, 207, 1], [206, 207, 209, 211, 1], [200, 203, 208, 209, 0],
    [199, 201, 203, 204, 0], [198, 199, 202, 207, 1], [186, 187, 201, 202, 0], [182, 186, 188, 191, 1], [186, 189, 193, 193, 1],
    [175, 178, 192, 192, 0], [177, 179, 186, 188, 1], [178, 180, 187, 188, 0], [179, 179, 187, 190, 1], [184, 187, 189, 192, 1],
    [186, 189, 189, 192, 0], [184, 187, 192, 192, 0], [184, 188, 192, 192, 1], [189, 192, 200, 204, 1], [195, 199, 199, 203, 0],
    [193, 197, 203, 209, 1], [199, 200, 202, 206, 0], [197, 201, 207, 211, 1], [199, 203, 206, 209, 0], [189, 194, 202, 202, 0],
    [178, 183, 193, 196, 0], [181, 182, 185, 188, 0], [178, 181, 183, 184, 1], [180, 181, 200, 201, 1], [199, 200, 202, 211, 1],
    [201, 202, 203, 212, 1], [196, 202, 202, 204, 0], [200, 203, 203, 211, 0], [200, 200, 206, 209, 0], [188, 189, 200, 200, 0],
    [188, 191, 193, 195, 1], [185, 187, 194, 195, 0], [185, 186, 188, 192, 1], [187, 187, 195, 195, 1], [188, 191, 195, 196, 0],
    [188, 190, 194, 196, 1], [189, 194, 195, 198, 1], [190, 191, 196, 198, 0], [182, 184, 189, 190, 0], [183, 183, 185, 189, 1],
    [183, 183, 188, 188, 1], [187, 187, 193, 198, 1], [189, 192, 192, 194, 0], [190, 190, 195, 202, 1], [191, 195, 200, 200, 1],
    [197, 197, 211, 212, 1], [205, 206, 209, 211, 0], [200, 204, 206, 209, 0], [202, 206, 216, 216, 1], [214, 214, 224, 224, 1],
    [211, 218, 223, 223, 0], [216, 217, 228, 229, 1], [221, 226, 240, 240, 1], [237, 238, 240, 243, 1], [234, 238, 238, 242, 0],
    [225, 226, 237, 239, 0], [224, 225, 228, 228, 1], [226, 229, 232, 234, 1], [229, 231, 235, 236, 1], [231, 233, 233, 240, 0],
    [225, 230, 232, 234, 1], [229, 231, 233, 235, 1], [231, 232, 237, 240, 1], [228, 229, 236, 237, 0], [223, 224, 229, 229, 0],
    [223, 223, 230, 230, 1], [225, 230, 232, 232, 0], [229, 230, 235, 236, 1], [229, 233, 240, 241, 1], [238, 241, 241, 243, 0],
    [236, 242, 245, 246, 1], [241, 243, 245, 245, 1], [242, 244, 245, 247, 1], [237, 239, 244, 246, 0], [231, 232, 237, 239, 0],
    [229, 233, 242, 242, 1], [238, 241, 249, 254, 1], [236, 240, 247, 248, 0], [208, 208, 241, 242, 0], [156, 200, 211, 281, 1],
    [190, 206, 212, 219, 0], [165, 167, 204, 206, 0], [162, 167, 169, 181, 0], [165, 169, 169, 174, 0], [132, 132, 168, 173, 0],
    [118, 130, 132, 132, 0], [117, 121, 129, 135, 0]
]

// Trend line segments, alternating down and up
const trends = [
    ['red', '8,374.500 28,374.500'],
    ['lime', '28,375 33,395.500 83,395.500 88,392 93,389.500 118,389 128,384 134,383 138,379 143,367 148,360 153,354 158,352 163,337 168,327.500 189,327.500 193,322.500 210,322 214,320 219,320 223,318 228,308 233,300 238,293 243,287 248,284 253,275.500 263,275 268,271 273,265 283,264 295,263.500 298,262 303,255 308,252 313,250.500 358,250.500'],
    ['red', '358,250.500 363,231.500 412,231.500 417,232.500 423,232.500 433,237.500 443,238.500 488,238.500'],
    ['lime', '488,239 493,257.500 499,255 527,255 533,251 543,249.500 548,247.500 565,246 568,244 578,243 583,240 588,237 593,230.500 600,230.500 605,226.500 615,226.500 620,224 625,221.500 635,221.500 640,220.500 650,220 660,218.500 730,218.500 734,216.500 740,216 744,213 748,206.500 813,206.500'],
    ['red', '813,206 818,177.500 953,177.500 958,179 963,183 973,183.500 978,190 983,191 988,192 993,195 998,206 1023,206.500 1028,208.500 1038,208.500 1043,214 1073,214 1078,218 1083,218 1093,222.500 1118,222.500'],
    ['lime', '1118,223 1123,260 1149,260 1153,254 1158,226 1164,225.500']
]

// Distance of the RSI line below the top of its pane, in thirds of a unit
const rsi = [
    160, 160, 164, 163, 158, 157, 187, 175, 176, 191, 202, 211, 202, 173, 154, 160, 138, 156, 162, 168,
    164, 160, 167, 146, 176, 156, 132, 112, 96, 86, 77, 61, 85, 83, 82, 81, 72, 83, 76, 132,
    105, 127, 153, 138, 128, 125, 123, 123, 119, 116, 157, 157, 154, 148, 160, 155, 160, 155, 152, 137,
    130, 126, 145, 162, 157, 148, 143, 175, 196, 203, 222, 241, 230, 215, 229, 215, 202, 212, 221, 228,
    211, 218, 224, 231, 241, 241, 241, 227, 240, 232, 238, 213, 176, 192, 187, 187, 179, 161, 152, 180,
    206, 212, 187, 187, 181, 173, 182, 158, 168, 162, 162, 155, 149, 149, 142, 156, 90, 108, 98, 94,
    104, 98, 93, 93, 117, 114, 114, 148, 138, 138, 128, 162, 174, 184, 170, 180, 173, 195, 181, 190,
    176, 160, 193, 213, 182, 170, 180, 126, 136, 162, 121, 162, 151, 175, 186, 190, 183, 202, 238, 232,
    244, 234, 258, 240, 204, 176, 172, 173, 232, 241, 248, 244, 248, 233, 199, 207, 190, 197, 216, 207,
    218, 218, 207, 182, 182, 203, 220, 214, 226, 250, 285, 260, 256, 290, 306, 285, 303, 324, 324, 318,
    268, 273, 282, 288, 282, 271, 281, 288, 254, 235, 254, 248, 262, 277, 282, 292, 292, 292, 262, 235,
    263, 282, 243, 166, 173, 164, 113, 114, 117, 88, 85, 80
]

// Adds an svg shape to a plot
function draw(parent, tag, attrs) {
    const el = document.createElementNS('http://www.w3.org/2000/svg', tag)
    for (const key in attrs) {
        el.setAttribute(key, attrs[key])
    }
    parent.appendChild(el)
}

const price = document.getElementById('price')

candles.forEach(([high, top, bottom, low, filled], i) => {
    const x = startX + i * step

    draw(price, 'rect', { x: x, y: high, width: 1, height: low - high + 1, fill: '#00b000' })

    if (top == bottom) {
        draw(price, 'rect', { x: x - 1, y: top, width: 3, height: 1, fill: '#00b000' })
    } else if (filled) {
        draw(price, 'rect', { x: x - 0.8, y: top, width: 2.6, height: bottom - top, fill: '#f4fff4', stroke: '#00d000', 'stroke-width': 0.6 })
    } else {
        draw(price, 'rect', { x: x - 0.7, y: top + 0.5, width: 2.4, height: bottom - top - 0.5, fill: '#001800', stroke: '#00c000', 'stroke-width': 0.9 })
    }
})

trends.forEach(([color, points]) => {
    draw(price, 'polyline', { points: points, fill: 'none', stroke: color, 'stroke-width': 1.5 })
})

const rsiPoints = rsi.map((v, i) => (startX + i * step) + ',' + (398 + v / 3).toFixed(1)).join(' ')
draw(document.getElementById('rsi'), 'polyline', { points: rsiPoints, fill: 'none', stroke: '#1a6cc0', 'stroke-width': 1 })
```
